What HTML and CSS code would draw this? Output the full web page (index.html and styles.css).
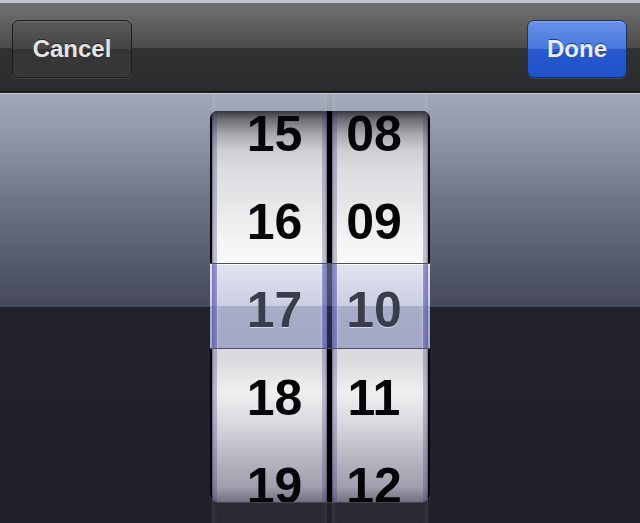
FILE: index.html
```html
<!DOCTYPE html>
<html>
<head>
<meta charset="utf-8">
<link rel="stylesheet" href="styles.css">
</head>
<body>
<div class="screen">
  <div class="toolbar">
    <button class="btn btn-cancel">Cancel</button>
    <button class="btn btn-done">Done</button>
  </div>
  <div class="stage">
    <div class="picker">
      <div class="wheel wheel-hour">
        <div class="reel">
          <div class="row">15</div>
          <div class="row">16</div>
          <div class="row">17</div>
          <div class="row">18</div>
          <div class="row">19</div>
        </div>
      </div>
      <div class="divider"></div>
      <div class="wheel wheel-min">
        <div class="reel">
          <div class="row">08</div>
          <div class="row">09</div>
          <div class="row">10</div>
          <div class="row">11</div>
          <div class="row">12</div>
        </div>
      </div>
      <div class="selection">
        <div class="sel-cell sel-hour">17</div>
        <div class="sel-div"></div>
        <div class="sel-cell sel-min">10</div>
      </div>
    </div>
  </div>
</div>
</body>
</html>
```

FILE: styles.css
```css
html, body {
  margin: 0;
  padding: 0;
  width: 640px;
  height: 523px;
  overflow: hidden;
  background: #21222e;
}

.screen {
  display: flex;
  flex-direction: column;
  height: 523px;
  font-family: "Liberation Sans", Arial, sans-serif;
}

.toolbar {
  height: 93px;
  box-sizing: border-box;
  border-top: 3px solid #c2c5cd;
  border-bottom: 2px solid #1c1d23;
  background: linear-gradient(#717171 0, #4b4b4c 45px, #313234 45px, #2a2b2d 100%);
  padding: 17px 13px 0 12px;
  display: flex;
  justify-content: space-between;
  align-items: flex-start;
}

.btn {
  font-family: "Liberation Sans", Arial, sans-serif;
  font-weight: bold;
  font-size: 24px;
  height: 58px;
  border-radius: 7px;
  padding: 0;
  color: #e4e4e4;
  text-shadow: 0 -1px 0 rgba(0, 0, 0, 0.55);
  box-sizing: border-box;
}

.btn-cancel {
  width: 120px;
  border: 1px solid #1d1d1f;
  background: linear-gradient(#5a5a5b 0, #444446 50%, #333335 50%, #39393b 100%);
  box-shadow: 0 1px 0 rgba(255, 255, 255, 0.12), inset 0 1px 0 rgba(255, 255, 255, 0.1);
}

.btn-done {
  width: 100px;
  border: 1px solid #1a2f66;
  color: #e8ecf6;
  background: linear-gradient(#6a92e8 0, #4677dc 50%, #2559cd 50%, #2253c8 100%);
  box-shadow: 0 1px 0 rgba(255, 255, 255, 0.12), inset 0 1px 0 rgba(255, 255, 255, 0.18);
}

.stage {
  flex: 1;
  border-top: 1px solid #c5c9d3;
  display: flex;
  justify-content: center;
  align-items: flex-start;
  padding-top: 17px;
  background:
    linear-gradient(to right,
      transparent 212px,
      rgba(255, 255, 255, 0.09) 212px,
      rgba(255, 255, 255, 0.04) 218px,
      rgba(255, 255, 255, 0.04) 321px,
      rgba(255, 255, 255, 0.09) 327px,
      transparent 327px,
      transparent 332px,
      rgba(255, 255, 255, 0.09) 332px,
      rgba(255, 255, 255, 0.04) 338px,
      rgba(255, 255, 255, 0.04) 422px,
      rgba(255, 255, 255, 0.09) 428px,
      transparent 428px),
    linear-gradient(#a3a8b8 0, #8a8fa2 56px, #6d7287 110px, #55596e 170px, #46495c 213px, #21222e 213px, #20212c 100%);
}

.picker {
  position: relative;
  width: 220px;
  height: 391px;
  box-sizing: border-box;
  border-radius: 8px;
  overflow: hidden;
  background: #050507;
  display: flex;
  padding: 0 2px;
  box-shadow: 0 1px 0 rgba(255, 255, 255, 0.12);
}

.wheel {
  height: 100%;
  overflow: hidden;
  box-sizing: border-box;
  background:
    linear-gradient(to right,
      rgba(30, 30, 70, 0.55) 0,
      rgba(60, 60, 120, 0.3) 2px,
      rgba(60, 60, 120, 0.28) 5px,
      transparent 5px,
      transparent calc(100% - 5px),
      rgba(60, 60, 120, 0.28) calc(100% - 5px),
      rgba(60, 60, 120, 0.3) calc(100% - 2px),
      rgba(30, 30, 70, 0.55) 100%),
    linear-gradient(#36363c 0, #707076 2.3%, #a8a8ae 6%, #cdcdd2 10%, #dcdce0 15%, #e6e6e8 23%, #f4f4f4 33%, #fafafa 39%, #dcdce0 60%, #d9d9dd 63%, #f0f0f2 72%, #d4d4da 81%, #b6b6c2 89%, #a0a0ae 96%, #70707e 100%);
}

.wheel-hour {
  width: 115px;
  padding-left: 10px;
}

.wheel-min {
  width: 96px;
  padding-right: 12px;
}

.reel {
  margin-top: -21px;
}

.row {
  height: 88px;
  line-height: 88px;
  text-align: center;
  font-weight: bold;
  font-size: 50px;
  color: #050508;
}

.divider {
  width: 5px;
  background: #000;
}

.selection {
  position: absolute;
  left: 0;
  right: 0;
  top: 152px;
  height: 86px;
  box-sizing: border-box;
  border-top: 1px solid #4a4e62;
  border-bottom: 1px solid #4c5066;
  padding: 0 2px;
  display: flex;
  background: linear-gradient(#e2e4f0 0, #cbcee2 50%, #a9adc9 50%, #a3a7c5 100%);
  box-shadow: inset 0 1px 0 rgba(255, 255, 255, 0.75);
}

.sel-cell {
  height: 84px;
  box-sizing: border-box;
  overflow: hidden;
  padding-top: 2px;
  line-height: 88px;
  text-align: center;
  font-weight: bold;
  font-size: 50px;
  color: #3a3d4b;
  text-shadow: 0 1px 0 rgba(255, 255, 255, 0.55);
  background: linear-gradient(to right,
    rgba(80, 80, 170, 0.7) 0,
    rgba(95, 96, 180, 0.55) 5px,
    rgba(255, 255, 255, 0.25) 5px,
    transparent 7px,
    transparent calc(100% - 7px),
    rgba(255, 255, 255, 0.25) calc(100% - 5px),
    rgba(95, 96, 180, 0.55) calc(100% - 5px),
    rgba(80, 80, 170, 0.7) 100%);
}

.sel-hour {
  width: 115px;
  padding-left: 10px;
}

.sel-min {
  width: 96px;
  padding-right: 12px;
}

.sel-div {
  width: 5px;
  height: 84px;
  background: linear-gradient(#53576a 0, #464a5e 50%, #2a2c3e 50%, #25273a 100%);
}
```
